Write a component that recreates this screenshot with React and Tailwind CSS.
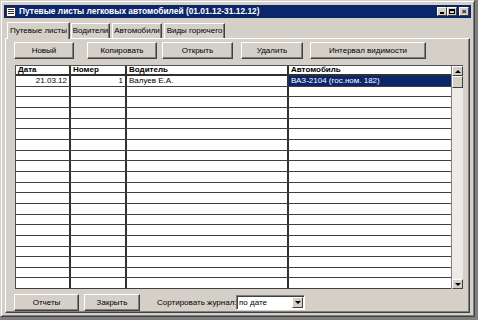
import React from "react";

function Btn({ w, children, cls = "" }) {
  return (
    <div
      className={`flex items-center justify-center h-[17px] bg-[#d4d0c8] border border-t-white border-l-white border-r-[#404040] border-b-[#404040] shadow-[inset_-1px_-1px_0_#808080] text-[8px] text-black whitespace-nowrap ${w} ${cls}`}
    >
      {children}
    </div>
  );
}

function Tab({ active, w, cls = "", children }) {
  return (
    <div
      className={`flex items-center justify-center text-[8px] leading-none whitespace-nowrap text-black border-l border-t border-l-white border-t-white border-r border-r-[#404040] shadow-[inset_-1px_0_0_#808080] ${w} ${cls} ${
        active ? "h-[17px] bg-[#d4d0c8] -mb-px z-10 relative" : "h-[15px] bg-[#d4d0c8]"
      }`}
    >
      {children}
    </div>
  );
}

const rows = Array.from({ length: 20 });

export default function App() {
  return (
    <div className="w-[478px] h-[320px] bg-[#808080] font-['Liberation_Sans',Arial,sans-serif] overflow-hidden">
      <div className="w-[475px] h-[317px] bg-[#d4d0c8] border border-t-[#d4d0c8] border-l-[#d4d0c8] border-r-[#404040] border-b-[#404040] shadow-[inset_1px_1px_0_white,inset_-1px_-1px_0_#808080] pt-[4px] px-[3px] flex flex-col">
        {/* title bar */}
        <div className="h-[13px] bg-[#0c266c] flex items-center pl-[2px] pr-[2px] shrink-0">
          <div className="w-[10px] h-[10px] bg-white border border-[#303030] flex flex-col justify-center gap-px px-px">
            <div className="h-px bg-[#303030]" />
            <div className="h-px bg-[#303030]" />
            <div className="h-px bg-[#303030]" />
          </div>
          <div className="ml-[3px] text-white font-bold text-[8.4px] leading-none whitespace-nowrap">
            Путевые листы легковых автомобилей (01.01.12-31.12.12)
          </div>
          <div className="ml-auto flex items-center">
            <div className="w-[10px] h-[9px] bg-[#d4d0c8] border border-t-white border-l-white border-r-[#404040] border-b-[#404040] flex items-end justify-center pb-[1px]">
              <div className="w-[4px] h-[2px] bg-black" />
            </div>
            <div className="w-[10px] h-[9px] bg-[#d4d0c8] border border-t-white border-l-white border-r-[#404040] border-b-[#404040] flex items-center justify-center">
              <div className="w-[6px] h-[5px] border border-black border-t-2" />
            </div>
            <div className="ml-[2px] w-[10px] h-[9px] bg-[#d4d0c8] border border-t-white border-l-white border-r-[#404040] border-b-[#404040] flex items-center justify-center text-[8px] font-bold leading-none text-black">
              ×
            </div>
          </div>
        </div>

        {/* tabs */}
        <div className="mt-[4px] ml-[3px] flex items-end h-[16px] shrink-0">
          <Tab active w="w-[63px]">Путевые листы</Tab>
          <Tab w="w-[39px]" cls="ml-[1px]">Водители</Tab>
          <Tab w="w-[50px]" cls="ml-[2px]">Автомобили</Tab>
          <Tab w="w-[61px]" cls="ml-[2px]">Виды горючего</Tab>
        </div>

        {/* panel */}
        <div className="flex-1 mx-[1px] mb-[3px] border border-t-white border-l-white border-r-[#404040] border-b-[#404040] shadow-[inset_-1px_-1px_0_#808080] flex flex-col pl-[8px] pr-[6px]">
          <div className="flex mt-[3px] shrink-0">
            <Btn w="w-[60px]">Новый</Btn>
            <Btn w="w-[70px]" cls="ml-[13px]">Копировать</Btn>
            <Btn w="w-[71px]" cls="ml-[5px]">Открыть</Btn>
            <Btn w="w-[62px]" cls="ml-[8px]">Удалить</Btn>
            <Btn w="w-[116px]" cls="ml-[7px]">Интервал видимости</Btn>
          </div>

          {/* grid */}
          <div className="mt-[6px] ml-px h-[224px] flex border-t border-l border-[#505050] bg-white">
            <div className="w-[438px] flex flex-col">
              <div className="h-[10px] flex shrink-0 border-b-2 border-[#303030] text-[8px] font-bold leading-none">
                <div className="w-[55px] border-r-2 border-[#303030] pl-[2px] flex items-center">Дата</div>
                <div className="w-[56px] border-r-2 border-[#303030] pl-[2px] flex items-center">Номер</div>
                <div className="w-[162px] border-r-2 border-[#303030] pl-[2px] flex items-center">Водитель</div>
                <div className="flex-1 pl-[2px] flex items-center">Автомобиль</div>
              </div>
              {rows.map((_, i) => (
                <div key={i} className="flex-1 flex border-b border-[#404040] text-[8px] leading-none">
                  <div className="w-[55px] border-r-2 border-[#303030] pr-[2px] flex items-center justify-end">
                    {i === 0 ? "21.03.12" : ""}
                  </div>
                  <div className="w-[56px] border-r-2 border-[#303030] pr-[2px] flex items-center justify-end">
                    {i === 0 ? "1" : ""}
                  </div>
                  <div className="w-[162px] border-r-2 border-[#303030] pl-[2px] flex items-center">
                    {i === 0 ? "Валуев Е.А." : ""}
                  </div>
                  <div
                    className={`flex-1 pl-[2px] flex items-center ${
                      i === 0 ? "bg-[#0c266c] text-white" : ""
                    }`}
                  >
                    {i === 0 ? "ВАЗ-2104 (гос.ном. 182)" : ""}
                  </div>
                </div>
              ))}
            </div>
            {/* scrollbar */}
            <div className="w-[12px] flex flex-col bg-[#ecebe8] border-l border-[#808080]">
              <div className="h-[10px] bg-[#d4d0c8] border border-t-white border-l-white border-r-[#404040] border-b-[#404040] flex items-center justify-center">
                <div className="w-0 h-0 border-l-[3px] border-r-[3px] border-b-[3px] border-l-transparent border-r-transparent border-b-black" />
              </div>
              <div className="h-[12px] bg-[#d4d0c8] border border-t-white border-l-white border-r-[#404040] border-b-[#404040]" />
              <div className="flex-1" />
              <div className="h-[10px] bg-[#d4d0c8] border border-t-white border-l-white border-r-[#404040] border-b-[#404040] flex items-center justify-center">
                <div className="w-0 h-0 border-l-[3px] border-r-[3px] border-t-[3px] border-l-transparent border-r-transparent border-t-black" />
              </div>
            </div>
          </div>

          {/* bottom */}
          <div className="flex items-center mt-[5px] shrink-0">
            <Btn w="w-[65px]">Отчеты</Btn>
            <Btn w="w-[56px]" cls="ml-[5px]">Закрыть</Btn>
            <div className="ml-[17px] w-[77px] text-[8px] text-black whitespace-nowrap">Сортировать журнал:</div>
            <div className="ml-[2px] w-[69px] h-[15px] bg-white border border-t-[#808080] border-l-[#808080] border-r-white border-b-white shadow-[inset_1px_1px_0_#404040] flex items-center">
              <div className="flex-1 pl-[2px] text-[8px] text-black leading-none">по дате</div>
              <div className="w-[11px] h-[11px] mr-px bg-[#d4d0c8] border border-t-white border-l-white border-r-[#404040] border-b-[#404040] flex items-center justify-center">
                <div className="w-0 h-0 border-l-[3px] border-r-[3px] border-t-[3px] border-l-transparent border-r-transparent border-t-black" />
              </div>
            </div>
          </div>
        </div>
      </div>
    </div>
  );
}
